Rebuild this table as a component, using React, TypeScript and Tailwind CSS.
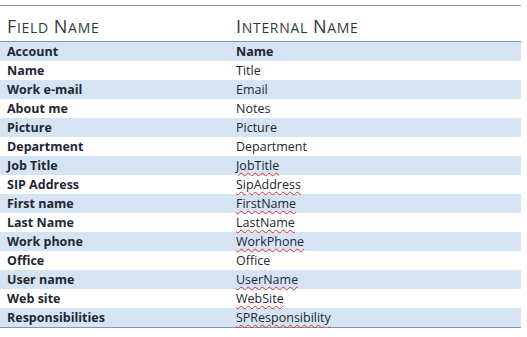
const rows: [string, string, boolean][] = [
  ['Account', 'Name', false],
  ['Name', 'Title', false],
  ['Work e-mail', 'Email', false],
  ['About me', 'Notes', false],
  ['Picture', 'Picture', false],
  ['Department', 'Department', false],
  ['Job Title', 'JobTitle', true],
  ['SIP Address', 'SipAddress', true],
  ['First name', 'FirstName', true],
  ['Last Name', 'LastName', true],
  ['Work phone', 'WorkPhone', true],
  ['Office', 'Office', false],
  ['User name', 'UserName', true],
  ['Web site', 'WebSite', true],
  ['Responsibilities', 'SPResponsibility', true],
]

function SmallCaps({ text }: { text: string }) {
  return (
    <span>
      {text.split(' ').map((word, i) => (
        <span key={i}>
          {i > 0 ? ' ' : ''}
          <span className="text-[18px]">{word[0]}</span>
          <span className="text-[14px] uppercase">{word.slice(1)}</span>
        </span>
      ))}
    </span>
  )
}

export default function App() {
  return (
    <div className="w-[527px] h-[337px] bg-white pt-[5px] font-['Open_Sans',sans-serif] text-[#1e2733]">
      <div className="w-[521px] border-t border-b border-[#7d97b5]">
        <div className="flex h-[36px] items-center pt-[5px] border-b border-[#7d97b5] text-[#34383e] tracking-[0.7px]">
          <div className="w-[236px] pl-[7px]">
            <SmallCaps text="Field Name" />
          </div>
          <div className="flex-1">
            <SmallCaps text="Internal Name" />
          </div>
        </div>
        {rows.map(([field, internal, squiggle], i) => (
          <div
            key={field}
            className={`flex h-[19px] items-center pt-[1px] text-[12.5px] leading-none ${i % 2 === 0 ? 'bg-[#d5e3f3]' : 'bg-white'}`}
          >
            <div className="w-[236px] pl-[7px] font-bold">{field}</div>
            <div className={`flex-1 ${i === 0 ? 'font-bold' : ''}`}>
              <span className={squiggle ? 'underline decoration-wavy decoration-[#e0302a] decoration-1 underline-offset-2' : ''}>
                {internal}
              </span>
            </div>
          </div>
        ))}
      </div>
    </div>
  )
}
